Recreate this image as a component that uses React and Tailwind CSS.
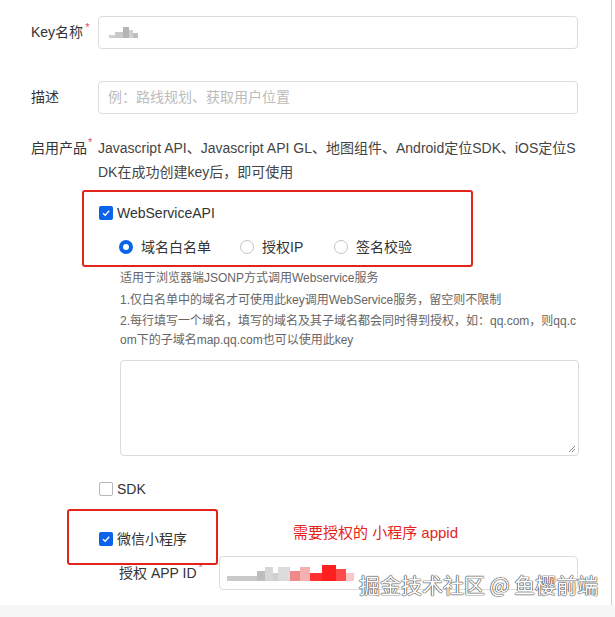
import React from 'react';

const font = "font-['Liberation_Sans','Noto_Sans_CJK_SC',sans-serif]";

const Check = ({ checked }) => (
  <span
    className={`w-[14px] h-[14px] rounded-[2px] flex items-center justify-center shrink-0 ${
      checked ? 'bg-[#0a63e8]' : 'border border-[#b8b8b8] bg-white'
    }`}
  >
    {checked && (
      <svg width="10" height="10" viewBox="0 0 10 10">
        <path d="M2 5.2 L4.2 7.3 L8.2 2.8" fill="none" stroke="#fff" strokeWidth="1.4" />
      </svg>
    )}
  </span>
);

const Radio = ({ checked, label }) => (
  <div className="flex items-center gap-[8px]">
    <span
      className={`w-[14px] h-[14px] rounded-full shrink-0 ${
        checked ? 'border-[4px] border-[#0a63e8]' : 'border border-[#c4c4c4]'
      }`}
    />
    <span className="text-[14px] text-[#333]">{label}</span>
  </div>
);

const Blur = ({ blocks }) => (
  <div className="flex items-end">
    {blocks.map((b, i) => (
      <span key={i} className="inline-block" style={{ width: b[0], height: b[1], background: b[2] }} />
    ))}
  </div>
);

export default function App() {
  return (
    <div className={`w-[615px] h-[617px] bg-white relative overflow-hidden ${font}`}>
      <div className="w-[612px] h-[605px] border-r border-[#cfcfcf] pt-[16px]">
        {/* Key名称 */}
        <div className="flex items-center h-[32px]">
          <div className="w-[98px] pl-[31px] text-[14px] text-[#333] flex">
            Key名称<span className="text-[#e34d59] text-[11px] -mt-[3px] ml-[2px]">*</span>
          </div>
          <div className="w-[480px] h-[33px] border border-[#dcdcdc] rounded-[4px] flex items-center pl-[10px]">
            <Blur
              blocks={[
                [6, 3, '#d0d0d0'],
                [8, 6, '#c8c8c8'],
                [6, 11, '#b4b4b4'],
                [4, 8, '#cfcfcf'],
                [5, 5, '#bdbdbd'],
              ]}
            />
          </div>
        </div>

        {/* 描述 */}
        <div className="flex items-center h-[33px] mt-[33px]">
          <div className="w-[98px] pl-[31px] text-[14px] text-[#333]">描述</div>
          <div className="w-[480px] h-[33px] border border-[#dcdcdc] rounded-[4px] flex items-center pl-[9px] text-[14px] text-[#bcbcbc]">
            例：路线规划、获取用户位置
          </div>
        </div>

        {/* 启用产品 */}
        <div className="flex mt-[22px]">
          <div className="w-[98px] pl-[31px] text-[14px] text-[#333] flex leading-[24px] whitespace-nowrap">
            启用产品<span className="text-[#e34d59] text-[11px] -mt-[6px] ml-[1px]">*</span>
          </div>
          <div className="text-[14px] text-[#444] leading-[24px] whitespace-nowrap">
            Javascript API、Javascript API GL、地图组件、Android定位SDK、iOS定位S
            <br />
            DK在成功创建key后，即可使用
          </div>
        </div>

        <div className="ml-[82px] mt-[6px] w-[391px] h-[77px] border-[2px] border-[#e3241d] rounded-[3px] pl-[15px] pt-[14px]">
          <div className="flex items-center gap-[4px] h-[14px]">
            <Check checked />
            <span className="text-[14px] text-[#333]">WebServiceAPI</span>
          </div>
          <div className="flex items-center mt-[20px] pl-[20px] h-[14px]">
            <div className="w-[121px]">
              <Radio checked label="域名白名单" />
            </div>
            <div className="w-[94px]">
              <Radio label="授权IP" />
            </div>
            <Radio label="签名校验" />
          </div>
        </div>

        <div className="ml-[120px] w-[462px] text-[12px] text-[#666] leading-[20px]">
          <div className="mt-[1px]">适用于浏览器端JSONP方式调用Webservice服务</div>
          <div className="mt-[2px]">1.仅白名单中的域名才可使用此key调用WebService服务，留空则不限制</div>
          <div className="mt-[2px] leading-[19px] whitespace-nowrap">
            2.每行填写一个域名，填写的域名及其子域名都会同时得到授权，如：qq.com，则qq.c
            <br />
            om下的子域名map.qq.com也可以使用此key
          </div>
        </div>

        <div className="ml-[120px] mt-[10px] w-[459px] h-[96px] border border-[#dcdcdc] rounded-[4px] relative">
          <svg className="absolute right-[2px] bottom-[2px]" width="8" height="8" viewBox="0 0 8 8">
            <path d="M7 1 L1 7 M7 4 L4 7" stroke="#888" strokeWidth="1" />
          </svg>
        </div>

        <div className="ml-[99px] mt-[26px] flex items-center gap-[4px] h-[14px]">
          <Check />
          <span className="text-[14px] text-[#333]">SDK</span>
        </div>

        <div className="relative mt-[36px]">
          <div className="absolute left-[67px] -top-[23px] w-[151px] h-[56px] border-[2px] border-[#e3241d] rounded-[3px]" />
          <div className="flex items-center h-[14px]">
            <div className="ml-[99px] flex items-center gap-[4px] w-[194px]">
              <Check checked />
              <span className="text-[14px] text-[#333]">微信小程序</span>
            </div>
            <span className="text-[15px] text-[#e3241d] -mt-[12px]">需要授权的 小程序 appid</span>
          </div>
        </div>

        <div className="flex items-center mt-[10px] h-[34px]">
          <div className="w-[219px] pl-[119px] text-[14px] text-[#333] flex whitespace-nowrap">
            授权 APP ID<span className="text-[#e34d59] text-[11px] -mt-[4px] ml-[2px]">*</span>
          </div>
          <div className="w-[359px] h-[34px] border border-[#dcdcdc] rounded-[4px] flex items-center pl-[7px]">
            <Blur
              blocks={[
                [30, 5, '#c9c9c9'],
                [8, 10, '#bebebe'],
                [8, 14, '#d6d6d6'],
                [5, 8, '#cfcfcf'],
                [12, 14, '#dcdcdc'],
                [10, 10, '#ef8a8a'],
                [10, 14, '#f5b0b0'],
                [12, 8, '#ff3030'],
                [14, 16, '#ff1f1f'],
                [10, 12, '#ff4a4a'],
                [8, 8, '#f8c8c8'],
              ]}
            />
          </div>
        </div>
      </div>

      <div className="h-[12px] bg-[#f6f6f6]" />

      <div className="absolute left-[359px] top-[570px] text-[21px] leading-[28px] text-white font-['Noto_Sans_CJK_SC',sans-serif] [text-shadow:0_0_1px_#333,0_0_1px_#333,0_0_1px_#333]">
        掘金技术社区 @ 鱼樱前端
      </div>
    </div>
  );
}
